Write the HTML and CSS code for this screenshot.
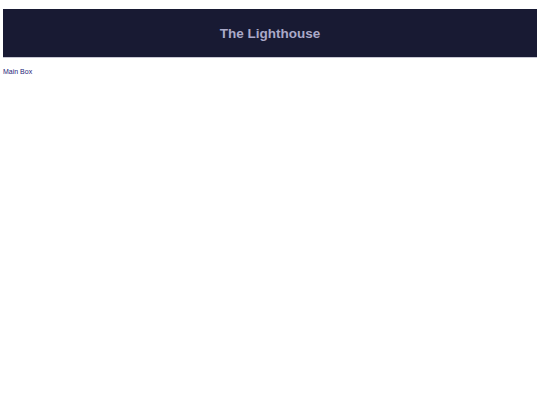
FILE: index.html
```html
<!DOCTYPE html>
<html>
<head>
<meta charset="utf-8">
<link rel="stylesheet" href="styles.css">
</head>
<body>
<div class="page">
  <header class="banner">
    <h1 class="title">The Lighthouse</h1>
  </header>
  <div class="main">Main Box</div>
</div>
</body>
</html>
```
FILE: styles.css
```css
html, body {
  margin: 0;
  padding: 0;
  background: #ffffff;
}
.page {
  padding: 9px 3px;
  font-family: "Liberation Sans", Arial, sans-serif;
}
.banner {
  height: 48px;
  background: #181a33;
  border-bottom: 1px solid #c8c8d4;
  display: flex;
  align-items: center;
  justify-content: center;
}
.title {
  margin: 0;
  font-size: 13.5px;
  font-weight: bold;
  color: #aaa9c8;
}
.main {
  margin-top: 9px;
  font-size: 7px;
  line-height: 9px;
  color: #1e1c78;
}
```
